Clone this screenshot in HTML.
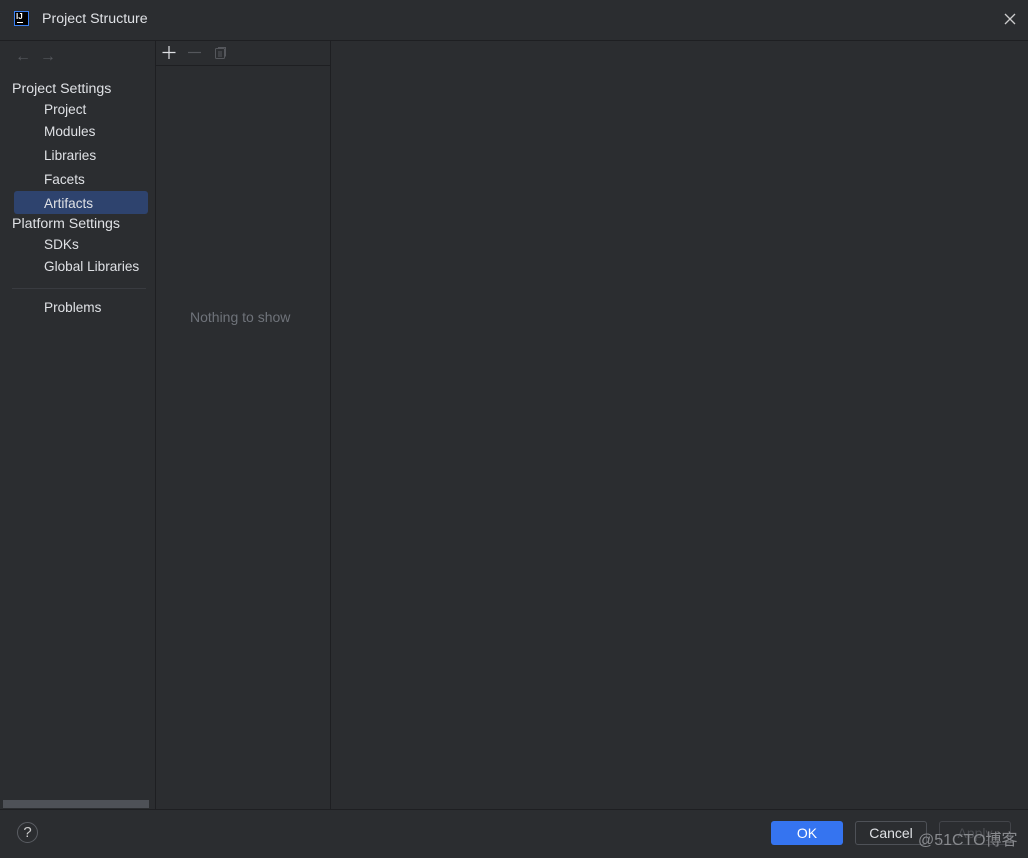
<!DOCTYPE html>
<html><head><style>
body{margin:0;width:1028px;height:858px;background:#2b2d30;font-family:"Liberation Sans",sans-serif;color:#dfe1e5;position:relative;overflow:hidden;font-size:13px}
.a{position:absolute}
.it{position:absolute;left:44px;font-size:13.6px}
.h{position:absolute;left:12px;font-size:14.2px}
</style></head><body>
<div class="a" style="left:14px;top:11px;width:15px;height:15px;background:#000;border:1px solid #3b82f6;box-sizing:border-box"></div>
<div class="a" style="left:16px;top:12px;color:#fff;font-size:8px;font-weight:bold">IJ</div>
<div class="a" style="left:17px;top:22px;width:6px;height:1px;background:#fff"></div>
<div class="a" style="left:42px;top:11px;font-size:14.2px">Project Structure</div>
<svg class="a" style="left:1004px;top:13px" width="12" height="12"><path d="M1 1L11 11M11 1L1 11" stroke="#ccc" stroke-width="1.3"/></svg>
<div class="a" style="left:0;top:40px;width:1028px;height:1px;background:#1e1f22"></div>
<div class="a" style="left:155px;top:41px;width:1px;height:768px;background:#1e1f22"></div>
<div class="a" style="left:330px;top:41px;width:1px;height:768px;background:#1e1f22"></div>
<div class="a" style="left:156px;top:65px;width:174px;height:1px;background:#1e1f22"></div>
<div class="a" style="left:0;top:809px;width:1028px;height:1px;background:#1e1f22"></div>
<div class="a" style="left:15px;top:48px;color:#55575c;font-size:16px">←&nbsp;&nbsp;→</div>
<svg class="a" style="left:161px;top:45px" width="70" height="16"><path d="M8 1V14M1.5 7.5H14.5" stroke="#dfe1e5" stroke-width="1.2"/><path d="M27 7.5H40" stroke="#55575c" stroke-width="1.2"/><rect x="54.5" y="3.5" width="9" height="10" rx="1" fill="none" stroke="#55575c"/><path d="M57 7h4M57 9h4M57 11h4M57 2.5h7.5v9" stroke="#55575c" fill="none"/></svg>
<div class="h" style="top:81px">Project Settings</div>
<div class="it" style="top:102px">Project</div>
<div class="it" style="top:124px">Modules</div>
<div class="it" style="top:148px">Libraries</div>
<div class="it" style="top:172px">Facets</div>
<div class="a" style="left:14px;top:191px;width:134px;height:23px;background:#2e436e;border-radius:3px"></div>
<div class="it" style="top:196px">Artifacts</div>
<div class="h" style="top:216px">Platform Settings</div>
<div class="it" style="top:237px">SDKs</div>
<div class="it" style="top:259px">Global Libraries</div>
<div class="a" style="left:12px;top:288px;width:134px;height:1px;background:#393b40"></div>
<div class="it" style="top:300px">Problems</div>
<div class="a" style="left:190px;top:309px;color:#6f737a;font-size:14px">Nothing to show</div>
<div class="a" style="left:3px;top:800px;width:146px;height:8px;background:#4e5157"></div>
<div class="a" style="left:17px;top:822px;width:21px;height:21px;border:1px solid #5a5d63;border-radius:50%;box-sizing:border-box;color:#ccc;text-align:center;font-size:15px;line-height:20px">?</div>
<div class="a" style="left:771px;top:821px;width:72px;height:24px;background:#3574f0;border-radius:3px;color:#fff;text-align:center;line-height:24px;font-size:14px">OK</div>
<div class="a" style="left:855px;top:821px;width:72px;height:24px;border:1px solid #4e5157;box-sizing:border-box;border-radius:3px;text-align:center;line-height:22px;font-size:14px">Cancel</div>
<div class="a" style="left:939px;top:821px;width:72px;height:24px;border:1px solid #43454a;box-sizing:border-box;border-radius:3px;text-align:center;line-height:22px;color:#4a4c51;font-size:14px">Apply</div>
<div class="a" style="left:918px;top:826px;color:#888a8e;font-size:16px;font-family:'Liberation Sans','Noto Sans CJK SC',sans-serif">@51CTO博客</div>
</body></html>
